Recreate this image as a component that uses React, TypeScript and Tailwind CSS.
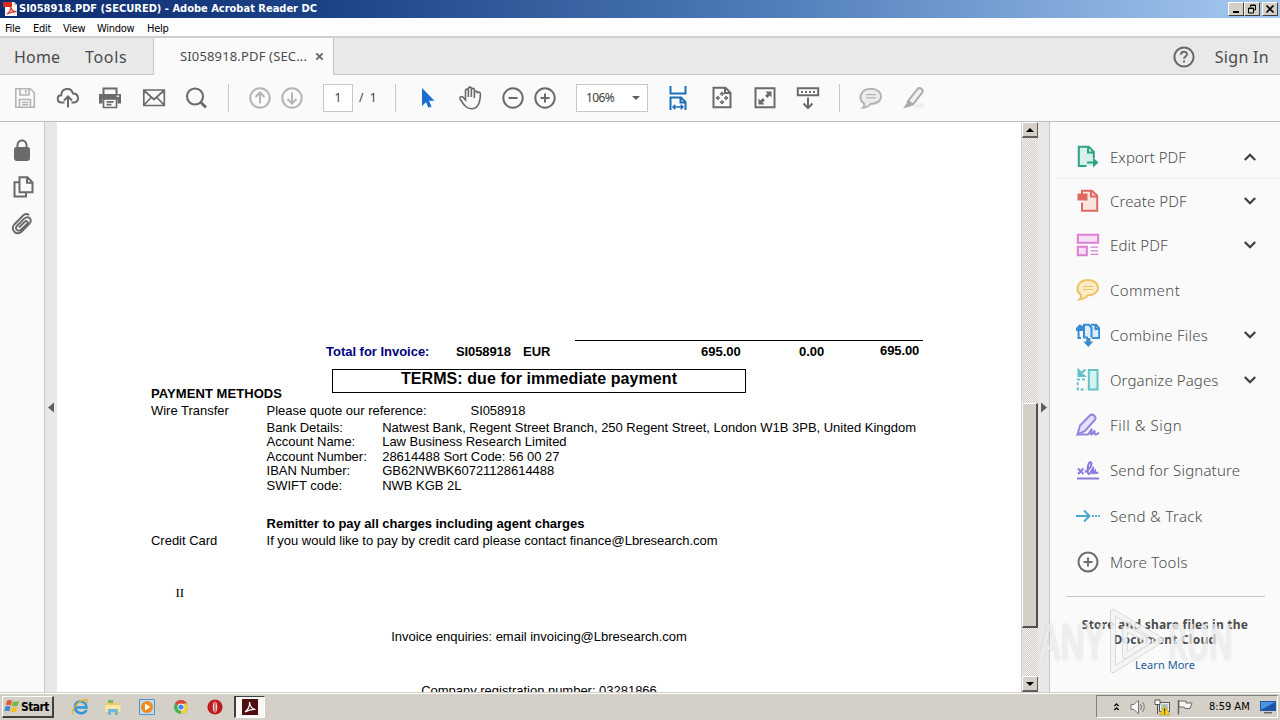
import type { ReactNode } from "react";
import clsx from "clsx";

type IconProps = { children: ReactNode; className?: string };

function Icon({ children, className }: IconProps) {
  return (
    <svg
      viewBox="0 0 24 24"
      fill="none"
      stroke="currentColor"
      strokeWidth="2"
      className={clsx("h-6 w-6 shrink-0", className)}
    >
      {children}
    </svg>
  );
}

function Separator({ className }: { className?: string }) {
  return <div className={clsx("h-7 w-px shrink-0 bg-[#c8c8c8]", className)} />;
}

function TitleBar() {
  const button =
    "flex h-[14px] items-center justify-center border border-t-white border-l-white border-r-[#404040] border-b-[#404040] bg-[#d4d0c8] text-black";
  return (
    <div className="flex h-[18px] shrink-0 items-center bg-[linear-gradient(90deg,#0e2c70_0%,#1c4286_25%,#4f7cba_60%,#a6caf0_100%)] pl-[3px] pr-[2px]">
      <svg viewBox="0 0 15 16" className="h-4 w-[15px] shrink-0">
        <path d="M2 1h9l3 3v11H2z" fill="#f4f4f4" />
        <path d="M11 1v3h3z" fill="#b9b9b9" />
        <path d="M0 1h9v5H0z" fill="#dc2a1c" />
        <path d="M4 13c3-2 4-5 3.500-7c1 3 3 5 6 4.500c-4 0-6.500 1-9.500 2.500z" fill="none" stroke="#d83a2d" strokeWidth="1.300" />
      </svg>
      <span className="ml-px whitespace-nowrap pt-px font-['DejaVu_Sans_Condensed','DejaVu_Sans',sans-serif] text-[11px] font-bold text-white [font-stretch:condensed]">
        SI058918.PDF (SECURED) - Adobe Acrobat Reader DC
      </span>
      <div className="ml-auto flex">
        <div className={clsx(button, "w-4")}>
          <svg viewBox="0 0 12 10" className="h-[10px] w-3">
            <path d="M3 7h6v2H3z" fill="#000" />
          </svg>
        </div>
        <div className={clsx(button, "w-4")}>
          <svg viewBox="0 0 12 10" className="h-[10px] w-3" fill="none" stroke="#000">
            <path d="M4.500 3V1h5v5H8M4 1.500h6M2.500 4h5v5h-5zM2 4.500h6" />
          </svg>
        </div>
        <div className={clsx(button, "ml-[2px] w-4")}>
          <svg viewBox="0 0 12 10" className="h-[10px] w-3" stroke="#000" strokeWidth="1.600">
            <path d="M2.500 1.500l7 7M9.500 1.500l-7 7" />
          </svg>
        </div>
      </div>
    </div>
  );
}

function MenuBar() {
  return (
    <div className="flex h-5 shrink-0 items-center border-b-2 border-[#cfcfcf] bg-[#fdfdfd] pl-[5px] pt-[3px] font-['DejaVu_Sans_Condensed','DejaVu_Sans',sans-serif] text-[11px] leading-[15px] tracking-[-0.3px] text-black [font-stretch:condensed]">
      <span className="w-[28px]">File</span>
      <span className="w-[30px]">Edit</span>
      <span className="w-[34px]">View</span>
      <span className="w-[50px]">Window</span>
      <span>Help</span>
    </div>
  );
}

function TabBar() {
  return (
    <div className="flex h-[37px] shrink-0 bg-[#fafafa] font-['Noto_Sans',sans-serif] text-[#4b4b4b]">
      <div className="flex w-[154px] items-center border-r border-b border-[#c6c6c6] bg-[#e9e9e9] pl-[14px] pt-px text-base">
        <span className="w-[71px] tracking-[0.2px]">Home</span>
        <span className="tracking-[0.7px]">Tools</span>
      </div>
      <div className="flex w-[179px] items-center pl-[26px]">
        <span className="w-[132px] whitespace-nowrap pt-px text-[13px] tracking-[0.15px]">SI058918.PDF (SEC...</span>
        <svg viewBox="0 0 10 10" className="ml-[3px] h-[9px] w-[9px]" stroke="#6a6a6a" strokeWidth="2.200">
          <path d="M1.500 1.500l7 7M8.500 1.500l-7 7" />
        </svg>
      </div>
      <div className="flex flex-1 items-center justify-end border-b border-l border-[#c6c6c6] bg-[#e9e9e9] pr-[11px] pt-px">
        <Icon className="text-[#6a6a6a]">
          <circle cx="12" cy="12" r="9.600" />
          <path d="M9 9.800c0-4 6-4 6-.6c0 2.300-3 2.200-3 4.600M12 15.400v2.200" strokeWidth="2" />
        </Icon>
        <span className="ml-[19px] text-base tracking-[0.3px]">Sign In</span>
      </div>
    </div>
  );
}

function Toolbar() {
  return (
    <div className="flex h-[47px] shrink-0 items-center border-b border-[#bdbdbd] bg-[#fafafa] pl-[13px] font-['Noto_Sans',sans-serif] text-[12px] text-[#6a6a6a]">
      <Icon className="text-[#b4b4b4]">
        <path d="M2.800 2.800h14.500l4 4v14.400H2.800zM7 3v6h9V3M6.500 21v-7.500h11V21M12.800 4v3.500M9 16.500h6.500M9 18.800h6.500" strokeWidth="1.600" />
      </Icon>
      <Icon className="ml-[19px]">
        <path d="M8.500 16.500H5.500c-5 0-5-7.200-.3-7.300C5.500 2 15 .5 17 7.500c6.500 0 6.500 9 1 9h-2.500M12 21.500V11M8 14.500l4-4l4 4" strokeWidth="2" />
      </Icon>
      <Icon className="ml-[18px]">
        <path d="M5.500 8V2.500h13V8" strokeWidth="2" />
        <path d="M1 8h22v9.500h-3.500V13h-15v4.500H1z" fill="currentColor" stroke="none" />
        <path d="M5.500 13h13v8.500h-13zM8.500 15.800h7M8.500 18.600h5" strokeWidth="1.700" />
        <path d="M18.500 10.200h2.500" stroke="#fff" strokeWidth="1.300" />
      </Icon>
      <Icon className="ml-5">
        <path d="M1.800 4h20.500v15.500H1.800zM2 4.500l10 9l10-9M2 19l7.500-8M22 19l-7.500-8" strokeWidth="1.700" />
      </Icon>
      <Icon className="ml-[18px]">
        <circle cx="11" cy="10.500" r="8" strokeWidth="2.100" />
        <path d="M16.500 16l5.500 5.500" strokeWidth="2.800" />
      </Icon>
      <Separator className="ml-5" />
      <Icon className="ml-[19px] text-[#b4b4b4]">
        <circle cx="12" cy="12" r="9.700" />
        <path d="M12 17.500v-11M7.500 11L12 6.500l4.500 4.500" />
      </Icon>
      <Icon className="ml-2 text-[#b4b4b4]">
        <circle cx="12" cy="12" r="9.700" />
        <path d="M12 6.500v11M7.500 13l4.500 4.500l4.500-4.500" />
      </Icon>
      <div className="ml-[19px] flex h-7 w-[30px] shrink-0 items-center justify-center border border-[#c8c8c8] bg-white text-[#3c3c3c]">
        1
      </div>
      <span className="ml-[6px] w-5 whitespace-nowrap text-[#3c3c3c]">/&nbsp; 1</span>
      <Separator className="ml-4" />
      <Icon className="ml-[19px] text-[#1b6fd0]">
        <path d="M7 2v18l4-3.800l2.500 5.500l3-1.300l-2.500-5.600h5.500z" fill="currentColor" stroke="none" />
      </Icon>
      <Icon className="ml-[19px]">
        <path
          d="M7.500 14V4.800c0-2.200 2.900-2.200 2.900 0V11V2.800c0-2.200 3-2.200 3 0V11V4c0-2.200 3-2.200 3 0v8V6.500c0-2 2.800-2 2.800 0c2.600-1.200 3.300.5 3.200 2c-.2 5.500-.8 14-8.500 14.200c-6 .2-8.500-4.500-11.700-9.500c-1.300-2.200 1.600-3.500 3-1.700z"
          strokeWidth="1.600"
        />
      </Icon>
      <Icon className="ml-[19px]">
        <circle cx="12" cy="12" r="9.700" />
        <path d="M7.500 12h9" />
      </Icon>
      <Icon className="ml-2">
        <circle cx="12" cy="12" r="9.700" />
        <path d="M7.500 12h9M12 7.500v9" />
      </Icon>
      <div className="ml-[19px] flex h-7 w-[72px] shrink-0 items-center justify-between border border-[#c8c8c8] bg-white pl-[9px] pr-[7px] text-[#3c3c3c]">
        <span className="tracking-[-0.6px]">106%</span>
        <svg viewBox="0 0 8 4" className="h-1 w-2">
          <path d="M0 0h8L4 4z" fill="#5f5f5f" />
        </svg>
      </div>
      <Icon className="ml-[18px] text-[#1b6fb8]">
        <path d="M4.500 0v7.500h15V0M4.500 24V11.500h10.500l4.500 4.500v8M14.500 12v4.500h5" strokeWidth="2" />
        <path d="M7 21h10M9.300 18.700L7 21l2.300 2.300M14.700 18.700L17 21l-2.300 2.300" strokeWidth="1.500" />
      </Icon>
      <Icon className="ml-5">
        <path d="M3.500 1.800h12l5 5v14.400h-17zM15 2v5h5" />
        <path d="M12 6.500v11M6.500 12h11" strokeWidth="1.300" strokeDasharray="3.500 4" />
        <path d="M10 8.500l2-2l2 2M10 15.500l2 2l2-2M8.500 10l-2 2l2 2M15.500 10l2 2l-2 2" strokeWidth="1.300" />
      </Icon>
      <Icon className="ml-[19px]">
        <path d="M2.500 2.300h19v19h-19z" />
        <path d="M12.500 5.500h6v6l-1.900-1.900l-2.400 2.300l-2.100-2.100l2.300-2.400zM11.500 18.500h-6v-6l1.900 1.900l2.400-2.300l2.100 2.100l-2.300 2.400z" fill="currentColor" stroke="none" />
      </Icon>
      <Icon className="ml-[19px]">
        <path d="M1.800 2.300h20.400v7H1.800z" />
        <path d="M5 5.900h14" strokeWidth="2" strokeDasharray="2 2" />
        <path d="M12 11.500v10M7.500 17.500L12 22l4.500-4.500" strokeWidth="2" />
      </Icon>
      <Separator className="ml-[19px]" />
      <Icon className="ml-[19px] text-[#b4b4b4]">
        <path d="M5 17.500C-1.500 13 1.500 2.800 12 2.800c13.500 0 13.500 15.200-.5 15.200c-2 2.500-5 3.700-7.500 3.700c1.500-1.200 1.600-2.500 1-4.200z" fill="#ececec" />
        <path d="M7 8.700h10M7 11.800h10" strokeWidth="1.300" />
      </Icon>
      <Icon className="ml-[18px] text-[#aaa]">
        <path d="M12 21.500h11v-4h-6z" fill="#ededed" stroke="none" />
        <path d="M7 15L16.500 3c2-2.500 6.500.5 4.700 3.500L12 18.500z" fill="#f0f0f0" />
        <path d="M6.500 14.500l5.500 4.500l-3.500 1.800l-6.500 1.500l3.500-4.500z" fill="currentColor" stroke="none" />
      </Icon>
    </div>
  );
}

function NavigationPane() {
  return (
    <div className="flex w-[57px] shrink-0">
      <div className="flex w-[45px] flex-col items-start border-r border-[#c6c6c6] bg-[#fafafa] pl-[10px] pt-4 text-[#6a6a6a]">
        <Icon>
          <path d="M7.500 11V7c0-6 9-6 9 0v4" strokeWidth="2" />
          <path d="M4 11.500c0-1.700 1-2.500 2.500-2.500h11c1.500 0 2.500.8 2.500 2.500V20c0 2-1 3-3 3H7c-2 0-3-1-3-3z" fill="currentColor" stroke="none" />
        </Icon>
        <Icon className="ml-px mt-[13px]">
          <path d="M8.500 2.300h8l5 5v10h-13zM16 2.500v5.300h5.500M8 7.300H3.500v14.200h11.500v-4" />
        </Icon>
        <Icon className="mt-[13px]">
          <path
            d="M8.700 15l5.800-5.700c2-1.700 4 .4 2.300 2.200L11 17c-3.600 3-7-.6-4-4l6.800-6.800c4.600-3.600 8.700.8 5.400 5l-8 8C6 23.500-.3 17.500 4 12l8.800-9c1.800-1.800 4.300-1.800 6-.5"
            strokeWidth="1.900"
            transform="translate(0.300 0.500)"
          />
        </Icon>
      </div>
      <div className="flex w-3 items-center bg-[#e8e8e8] pl-[3px]">
        <svg viewBox="0 0 6 10" className="h-[11px] w-[6px]">
          <path d="M6 0v10L0 5z" fill="#5f5f5f" />
        </svg>
      </div>
    </div>
  );
}

const bankDetails = [
  { label: "Bank Details:", value: "Natwest Bank, Regent Street Branch, 250 Regent Street, London W1B 3PB, United Kingdom", height: "h-[14px]" },
  { label: "Account Name:", value: "Law Business Research Limited", height: "h-[15px]" },
  { label: "Account Number:", value: "28614488 Sort Code: 56 00 27", height: "h-[14px]" },
  { label: "IBAN Number:", value: "GB62NWBK60721128614488", height: "h-[15px]" },
  { label: "SWIFT code:", value: "NWB KGB 2L", height: "h-[15px]" },
];

function InvoicePage() {
  return (
    <div className="flex w-[964px] shrink-0 flex-col overflow-hidden whitespace-nowrap bg-white font-['Liberation_Sans',Arial,sans-serif] text-[13px] leading-[15px] tracking-[-0.02px] text-black">
      <div className="mt-[218px] ml-[518px] h-px w-[348px] shrink-0 bg-black" />
      <div className="flex h-[28px] shrink-0 pl-[269px] pt-[3px] font-bold">
        <span className="w-[130px] text-[#000080]">Total for Invoice:</span>
        <span className="w-[67px] tracking-[-0.1px]">SI058918</span>
        <span className="w-[178px]">EUR</span>
        <span className="w-[98px]">695.00</span>
        <span className="w-[81px]">0.00</span>
        <span className="-mt-px tracking-[-0.1px]">695.00</span>
      </div>
      <div className="flex h-[34px] shrink-0 pl-[94px]">
        <span className="w-[181px] pt-[17px] font-bold tracking-[0.07px]">PAYMENT METHODS</span>
        <div className="flex h-6 w-[414px] justify-center border border-black text-base font-bold leading-[17px] tracking-[0.07px]">
          TERMS: due for immediate payment
        </div>
      </div>
      <div className="flex h-[17px] shrink-0 pl-[94px]">
        <span className="w-[115.6px]">Wire Transfer</span>
        <span className="w-[204px]">Please quote our reference:</span>
        <span className="tracking-[-0.1px]">SI058918</span>
      </div>
      {bankDetails.map((row) => (
        <div key={row.label} className={clsx("flex shrink-0 pl-[209.6px]", row.height)}>
          <span className="w-[115.600px]">{row.label}</span>
          <span>{row.value}</span>
        </div>
      ))}
      <div className="mt-[23px] h-[17px] shrink-0 pl-[209.6px] font-bold tracking-[-0.03px]">Remitter to pay all charges including agent charges</div>
      <div className="flex h-[15px] shrink-0 pl-[94px]">
        <span className="w-[115.6px]">Credit Card</span>
        <span>If you would like to pay by credit card please contact finance@Lbresearch.com</span>
      </div>
      <div className="mt-[37px] ml-[118.5px] shrink-0 font-['Liberation_Serif',serif]">II</div>
      <div className="mt-[29px] shrink-0 text-center">Invoice enquiries: email invoicing@Lbresearch.com</div>
      <div className="mt-[39px] shrink-0 text-center">Company registration number: 03281866</div>
    </div>
  );
}

function ScrollArrow({ up }: { up?: boolean }) {
  return (
    <div className="flex h-4 w-[17px] shrink-0 items-center justify-center border-t border-l border-r-2 border-b-2 border-t-white border-l-white border-r-[#606060] border-b-[#606060] bg-[#d4d0c8]">
      <svg viewBox="0 0 8 4" className="h-1 w-2">
        <path d={up ? "M0 4h8L4 0z" : "M0 0h8L4 4z"} fill="#000" />
      </svg>
    </div>
  );
}

function ScrollBar() {
  return (
    <div className="flex w-[17px] shrink-0 flex-col border-l border-[#d4d0c8] bg-[repeating-conic-gradient(#d0cbc3_0_25%,#f7f5f2_0_50%)] bg-[length:2px_2px]">
      <ScrollArrow up />
      <div className="mt-[265px] h-[225px] w-4 border-t border-l border-r-2 border-b-2 border-t-white border-l-white border-r-[#505050] border-b-[#505050] bg-[#d4d0c8]" />
      <div className="mt-auto">
        <ScrollArrow />
      </div>
    </div>
  );
}

const tools: { name: string; height: string; chevron?: "up" | "down"; color: string; tracking: string; icon: ReactNode }[] = [
  {
    name: "Export PDF",
    height: "h-[44px] border-b border-[#f0f0f0]",
    chevron: "up",
    color: "text-[#2fa284]",
    tracking: "tracking-[0.02px]",
    icon: (
      <>
        <path d="M2.800 1.800h10l5 5v14h-15z" fill="#d8f0ea" stroke="none" />
        <path d="M10.500 21H2.800V1.800h10l5 5V13M12 2v5.500h6M11 17.500h10" />
        <path d="M17 12.500l5.500 5l-5.500 5z" fill="currentColor" stroke="none" />
      </>
    ),
  },
  {
    name: "Create PDF",
    height: "h-[44px]",
    chevron: "down",
    color: "text-[#de6b60]",
    tracking: "tracking-[0.1px]",
    icon: (
      <>
        <path d="M6 1.800h10l5.200 5v15H6z" fill="#fbe3df" />
        <path d="M15 2v5.500h6" />
        <path d="M3.500 10h5v3.500h-5z" fill="#fafafa" stroke="none" />
        <path d="M1.500 4.500h10v7h-10z" fill="currentColor" stroke="none" />
      </>
    ),
  },
  {
    name: "Edit PDF",
    height: "h-[44px]",
    chevron: "down",
    color: "text-[#d97fd4]",
    tracking: "tracking-[0.1px]",
    icon: (
      <>
        <path d="M1.800 1.800h20.400v8H1.800zM1.800 13.800h9v8.400h-9z" fill="#f8dff6" />
        <path d="M14.500 14.200H22M14.500 17.800H22M14.500 21.400H22" strokeWidth="1.300" />
      </>
    ),
  },
  {
    name: "Comment",
    height: "h-[45px]",
    color: "text-[#eec063]",
    tracking: "tracking-[0.4px]",
    icon: (
      <>
        <path d="M5 17C-1.500 12 1.500 2 12 2c13.500 0 13.500 15.500-.5 15.500c-2 2.500-5 4-8 4c1.500-1.200 2-2.500 1.500-4.500z" fill="#fcebc4" />
        <path d="M7 8.500h10M7 11.500h10" strokeWidth="1.200" />
      </>
    ),
  },
  {
    name: "Combine Files",
    height: "h-[45px]",
    chevron: "down",
    color: "text-[#3b8bd0]",
    tracking: "tracking-[0.22px]",
    icon: (
      <>
        <path d="M5 15H2.500V8M12 14.500H8V1.800h5l2.500 3V14.500M15 1.800h5l3.200 3.500V15H16M19.500 2v4H23" fill="#dcedfb" />
        <path d="M0 5l4-4l1 1.500h3V8H0z" fill="currentColor" stroke="none" />
        <path d="M10.300 15h4v3.500h3L12.300 24l-5-5.500h3z" fill="currentColor" stroke="none" />
      </>
    ),
  },
  {
    name: "Organize Pages",
    height: "h-[45px]",
    chevron: "down",
    color: "text-[#62c2c8]",
    tracking: "tracking-[0.1px]",
    icon: (
      <>
        <path d="M12.800 2h8.700v19.500h-8.700z" fill="#d5f2f3" />
        <path d="M9 11.500H1.800v10H10" strokeDasharray="3 2" />
        <path d="M9.500 1.500L5 5.500M2.500 2v6h6z" fill="currentColor" />
      </>
    ),
  },
  {
    name: "Fill & Sign",
    height: "h-[45px]",
    color: "text-[#9484dc]",
    tracking: "tracking-[0.55px]",
    icon: (
      <>
        <path d="M1.500 21.500l2.500-9L14 2.300c3-2 7 1.500 4.800 4.500L9 18z" fill="#e6e0fa" />
        <path d="M1.500 21.500H12c1-1 2-3.500 3.500-5c.5 1.500-1.500 5 0 5c1.200 0 1.500-3 3-3.500c.5 1-.5 3.500 1 3.500c1.200 0 2-.8 3.500-1.800" />
      </>
    ),
  },
  {
    name: "Send for Signature",
    height: "h-[46px]",
    color: "text-[#8a7be0]",
    tracking: "tracking-[0.17px]",
    icon: <path d="M1 20.500h22M2 10.500l5.500 5.500M7.500 10.500L2 16M9 14c5-2 8-8.500 5.500-10c-3 .5-4 12-1.500 12c2 0 2.500-4 4-6c.5 2-1 5.500 0 5.500c1.300 0 1.500-2 2-2.500c0 2 1 3 3 1" />,
  },
  {
    name: "Send & Track",
    height: "h-[46px]",
    color: "text-[#4ea6cf]",
    tracking: "tracking-[0.35px]",
    icon: (
      <>
        <path d="M0 12h13M8 6.500l5.500 5.500L8 17.500" />
        <path d="M16 12h8" strokeDasharray="1.800 1.300" />
      </>
    ),
  },
  {
    name: "More Tools",
    height: "h-[46px]",
    color: "text-[#6d6d6d]",
    tracking: "tracking-[0.3px]",
    icon: (
      <>
        <circle cx="12" cy="12" r="9.500" />
        <path d="M7.500 12h9M12 7.500v9" />
      </>
    ),
  },
];

function ToolsPane() {
  return (
    <div className="relative flex w-[231px] shrink-0 flex-col border-l border-[#c6c6c6] bg-[#fafafa] pt-[13px] font-['Noto_Sans',sans-serif] text-[#4b4b4b]">
      {tools.map((tool) => (
        <div key={tool.name} className={clsx("ml-[6px] flex shrink-0 items-center pl-5", tool.height)}>
          <Icon className={tool.color}>{tool.icon}</Icon>
          <span className={clsx("ml-[10px] whitespace-nowrap pt-px text-[15px] font-light", tool.tracking)}>{tool.name}</span>
          {tool.chevron && (
            <svg viewBox="0 0 12 8" className="ml-auto mr-6 h-2 w-3" fill="none" stroke="#404040" strokeWidth="2.300">
              <path d={tool.chevron === "up" ? "M0.800 7L6 1.800L11.200 7" : "M0.800 1L6 6.200L11.200 1"} />
            </svg>
          )}
        </div>
      ))}
      <div className="ml-4 mt-[11px] h-px w-[199px] shrink-0 bg-[#c6c6c6]" />
      <p className="mt-5 text-center text-[12px] font-bold leading-[15px] tracking-[0.24px]">
        Store and share files in the
        <br />
        Document Cloud
      </p>
      <p className="mt-[10px] text-center text-[11px] leading-[16px] tracking-[0.05px] text-[#1c5c9c]">Learn More</p>

      {/* watermark floats over the pane and the scrollbar gutter */}
      <div className="absolute -left-[11px] top-[486px] flex h-[66px] w-[194px] items-center justify-between font-['Open_Sans',sans-serif] text-[50px] font-semibold leading-none text-white/65 [text-shadow:0_0_2px_#8886]">
        <span className="w-[66px] origin-left scale-x-[0.64]">ANY</span>
        <span className="flex w-[64px] origin-right scale-x-[0.6] justify-end">RUN</span>
        <svg viewBox="0 0 60 66" className="absolute left-[68px] top-0 h-[66px] w-[60px]" fill="none">
          <path d="M6 4l48 28L6 62zM18 20l24 13l-24 15z" stroke="#aaa" strokeOpacity=".5" strokeWidth="6" strokeLinejoin="round" />
          <path d="M6 4l48 28L6 62zM18 20l24 13l-24 15z" stroke="#fff" strokeOpacity=".75" strokeWidth="4.500" strokeLinejoin="round" />
        </svg>
      </div>
    </div>
  );
}

function Taskbar() {
  return (
    <div className="flex h-7 shrink-0 items-center border-t border-[#d4d0c8] bg-[#d4d0c8] pl-[2px] pr-[2px] font-['DejaVu_Sans_Condensed','DejaVu_Sans',sans-serif] text-[11px] text-black shadow-[inset_0_1px_0_#fff] [font-stretch:condensed]">
      <div className="flex h-[22px] w-[52px] items-center border-t border-l border-r-2 border-b-2 border-t-white border-l-white border-r-[#404040] border-b-[#404040] pl-px">
        <svg viewBox="0 0 16 16" className="h-4 w-4 shrink-0">
          <path d="M3 2.500c2-1 3.500-.6 5 .3L6.800 7.500c-2-.9-3.500-.9-5-.2z" fill="#e5592c" />
          <path d="M9 3.200c2 .8 4 .8 6-.2l-1.300 4.700c-2 .9-4 .9-5.900.1z" fill="#76b843" />
          <path d="M1.500 8.500c2-.9 3.500-.6 5 .2L5.200 13.300c-1.700-.8-3.400-.8-5-.1z" fill="#3e86d8" />
          <path d="M7.600 9.100c2 .8 4 .8 6-.1l-1.300 4.600c-2 .9-4 .9-6 0z" fill="#f3bf32" />
        </svg>
        <span className="ml-px pt-px text-[12px] font-bold tracking-[-0.6px]">Start</span>
      </div>
      <svg viewBox="0 0 18 18" className="ml-[17px] h-[18px] w-[18px]" fill="none">
        <path d="M15.500 12c-3 5.500-11.500 3.500-11.500-3c0-7.500 11-7.500 11.500.5H5" stroke="#3297dc" strokeWidth="2.600" />
        <path d="M2 16.500C-1.500 14 8 1 15.500 1.500c1.700.3 1 2.500.2 3.500" stroke="#eab42b" strokeWidth="1.400" />
      </svg>
      <svg viewBox="0 0 18 18" className="ml-[15px] h-[18px] w-[18px]">
        <path d="M2 4h6l1 1h7v10H2z" fill="#edcd6b" />
        <path d="M4 2h5v3H4z" fill="#76b767" />
        <path d="M1.500 7h15v7h-15z" fill="#f8e7a1" />
        <path d="M4 17v-6h10v6h-3v-3H7v3z" fill="#72b5de" />
      </svg>
      <svg viewBox="0 0 18 18" className="ml-4 h-[18px] w-[18px]">
        <path d="M1.500 1.500h15v15h-15z" fill="#bfdcf4" stroke="#5692c8" />
        <circle cx="9" cy="9" r="6" fill="#f18a19" />
        <path d="M7 5.500l5.500 3.500L7 12.500z" fill="#fff" />
      </svg>
      <svg viewBox="0 0 18 18" className="ml-4 h-[18px] w-[18px]">
        <circle cx="9" cy="9" r="7" fill="#4caf50" />
        <path d="M9 9L2.900 5.500A7 7 0 0 1 15.100 5.500z" fill="#dc4437" />
        <path d="M9 9l3-3.500h3.100A7 7 0 0 1 9 16z" fill="#f7cc3a" />
        <circle cx="9" cy="9" r="3.400" fill="#fff" />
        <circle cx="9" cy="9" r="2.600" fill="#4285e8" />
      </svg>
      <svg viewBox="0 0 18 18" className="ml-4 h-[18px] w-[18px]">
        <circle cx="9" cy="9" r="7.600" fill="#bd1d20" />
        <ellipse cx="9" cy="9" rx="2.200" ry="5.600" fill="#f6dddd" />
        <path d="M9 4v10" stroke="#a81515" />
      </svg>
      <div className="ml-[10px] flex h-[22px] w-[31px] items-center justify-center border-t border-l-2 border-r border-b border-t-[#404040] border-l-[#404040] border-r-white border-b-white bg-[#f8f7f5]">
        <svg viewBox="0 0 16 16" className="h-4 w-4">
          <path d="M0 0h16v16H0z" fill="#4d0f0d" />
          <path d="M3 13c3-2.500 5-6.500 4.500-10c.5 4.500 2.500 7 6 7.500c-4-.5-7 .5-10.500 2.500z" fill="none" stroke="#fff" strokeWidth="1.200" />
        </svg>
      </div>
      <div className="ml-auto flex h-[23px] w-[182px] items-center border border-t-[#808080] border-l-[#808080] border-r-white border-b-white pl-4">
        <svg viewBox="0 0 8 10" className="h-[10px] w-[7px]" fill="none" stroke="#000" strokeWidth="1.500">
          <path d="M1.500 4L4 1.500L6.500 4M1.500 8.500L4 6l2.500 2.500" />
        </svg>
        <svg viewBox="0 0 18 18" className="ml-[9px] h-[18px] w-[18px]" fill="none" stroke="#777">
          <path d="M2 6.500h3L9.500 2v14L5 11.500H2z" fill="#f5f5f5" />
          <path d="M11.500 6q2 3 0 6M13.500 4q3.500 5 0 10" />
        </svg>
        <svg viewBox="0 0 18 18" className="ml-[6px] h-[18px] w-[18px]">
          <path d="M6.500 4.500h10v9h-10z" fill="#efefef" stroke="#555" />
          <path d="M8 6h7v6H8z" fill="#b4c6dc" />
          <path d="M2 2h5v4.500H2zM4.500 6.500V16" fill="#fff" stroke="#555" />
          <path d="M11.500 7l5.500 10H6.500z" fill="#f5cf20" stroke="#a98a17" strokeWidth=".5" />
          <path d="M11.700 10.500v3M11.700 14.500v1.300" stroke="#000" />
        </svg>
        <svg viewBox="0 0 18 18" className="ml-[5px] h-[18px] w-[18px]" stroke="#666">
          <path d="M2.500 2v14.500" strokeWidth="1.500" />
          <path d="M3 3h7v2h6l-2 5.500H9L8 9H3z" fill="#f7f7f7" />
        </svg>
        <span className="ml-[15px] w-[51px] whitespace-nowrap pt-[2px] tracking-[0px]">8:59 AM</span>
        <svg viewBox="0 0 16 14" className="h-[14px] w-4">
          <path d="M0 1h16v10H0z" fill="#1b56a8" />
          <path d="M1 2h14L1 10z" fill="#4e93dc" />
          <path d="M4 12h8v1.500H4z" fill="#666" />
        </svg>
      </div>
    </div>
  );
}

export default function App() {
  return (
    <div className="flex h-[720px] w-[1280px] flex-col overflow-hidden bg-white">
      <TitleBar />
      <MenuBar />
      <TabBar />
      <Toolbar />
      <div className="flex min-h-0 flex-1 overflow-hidden">
        <NavigationPane />
        <InvoicePage />
        <ScrollBar />
        <div className="flex w-[11px] shrink-0 items-center bg-[#e8e8e8] pl-[3px]">
          <svg viewBox="0 0 6 10" className="h-[11px] w-[6px]">
            <path d="M0 0v10l6-5z" fill="#5f5f5f" />
          </svg>
        </div>
        <ToolsPane />
      </div>
      <Taskbar />
    </div>
  );
}
